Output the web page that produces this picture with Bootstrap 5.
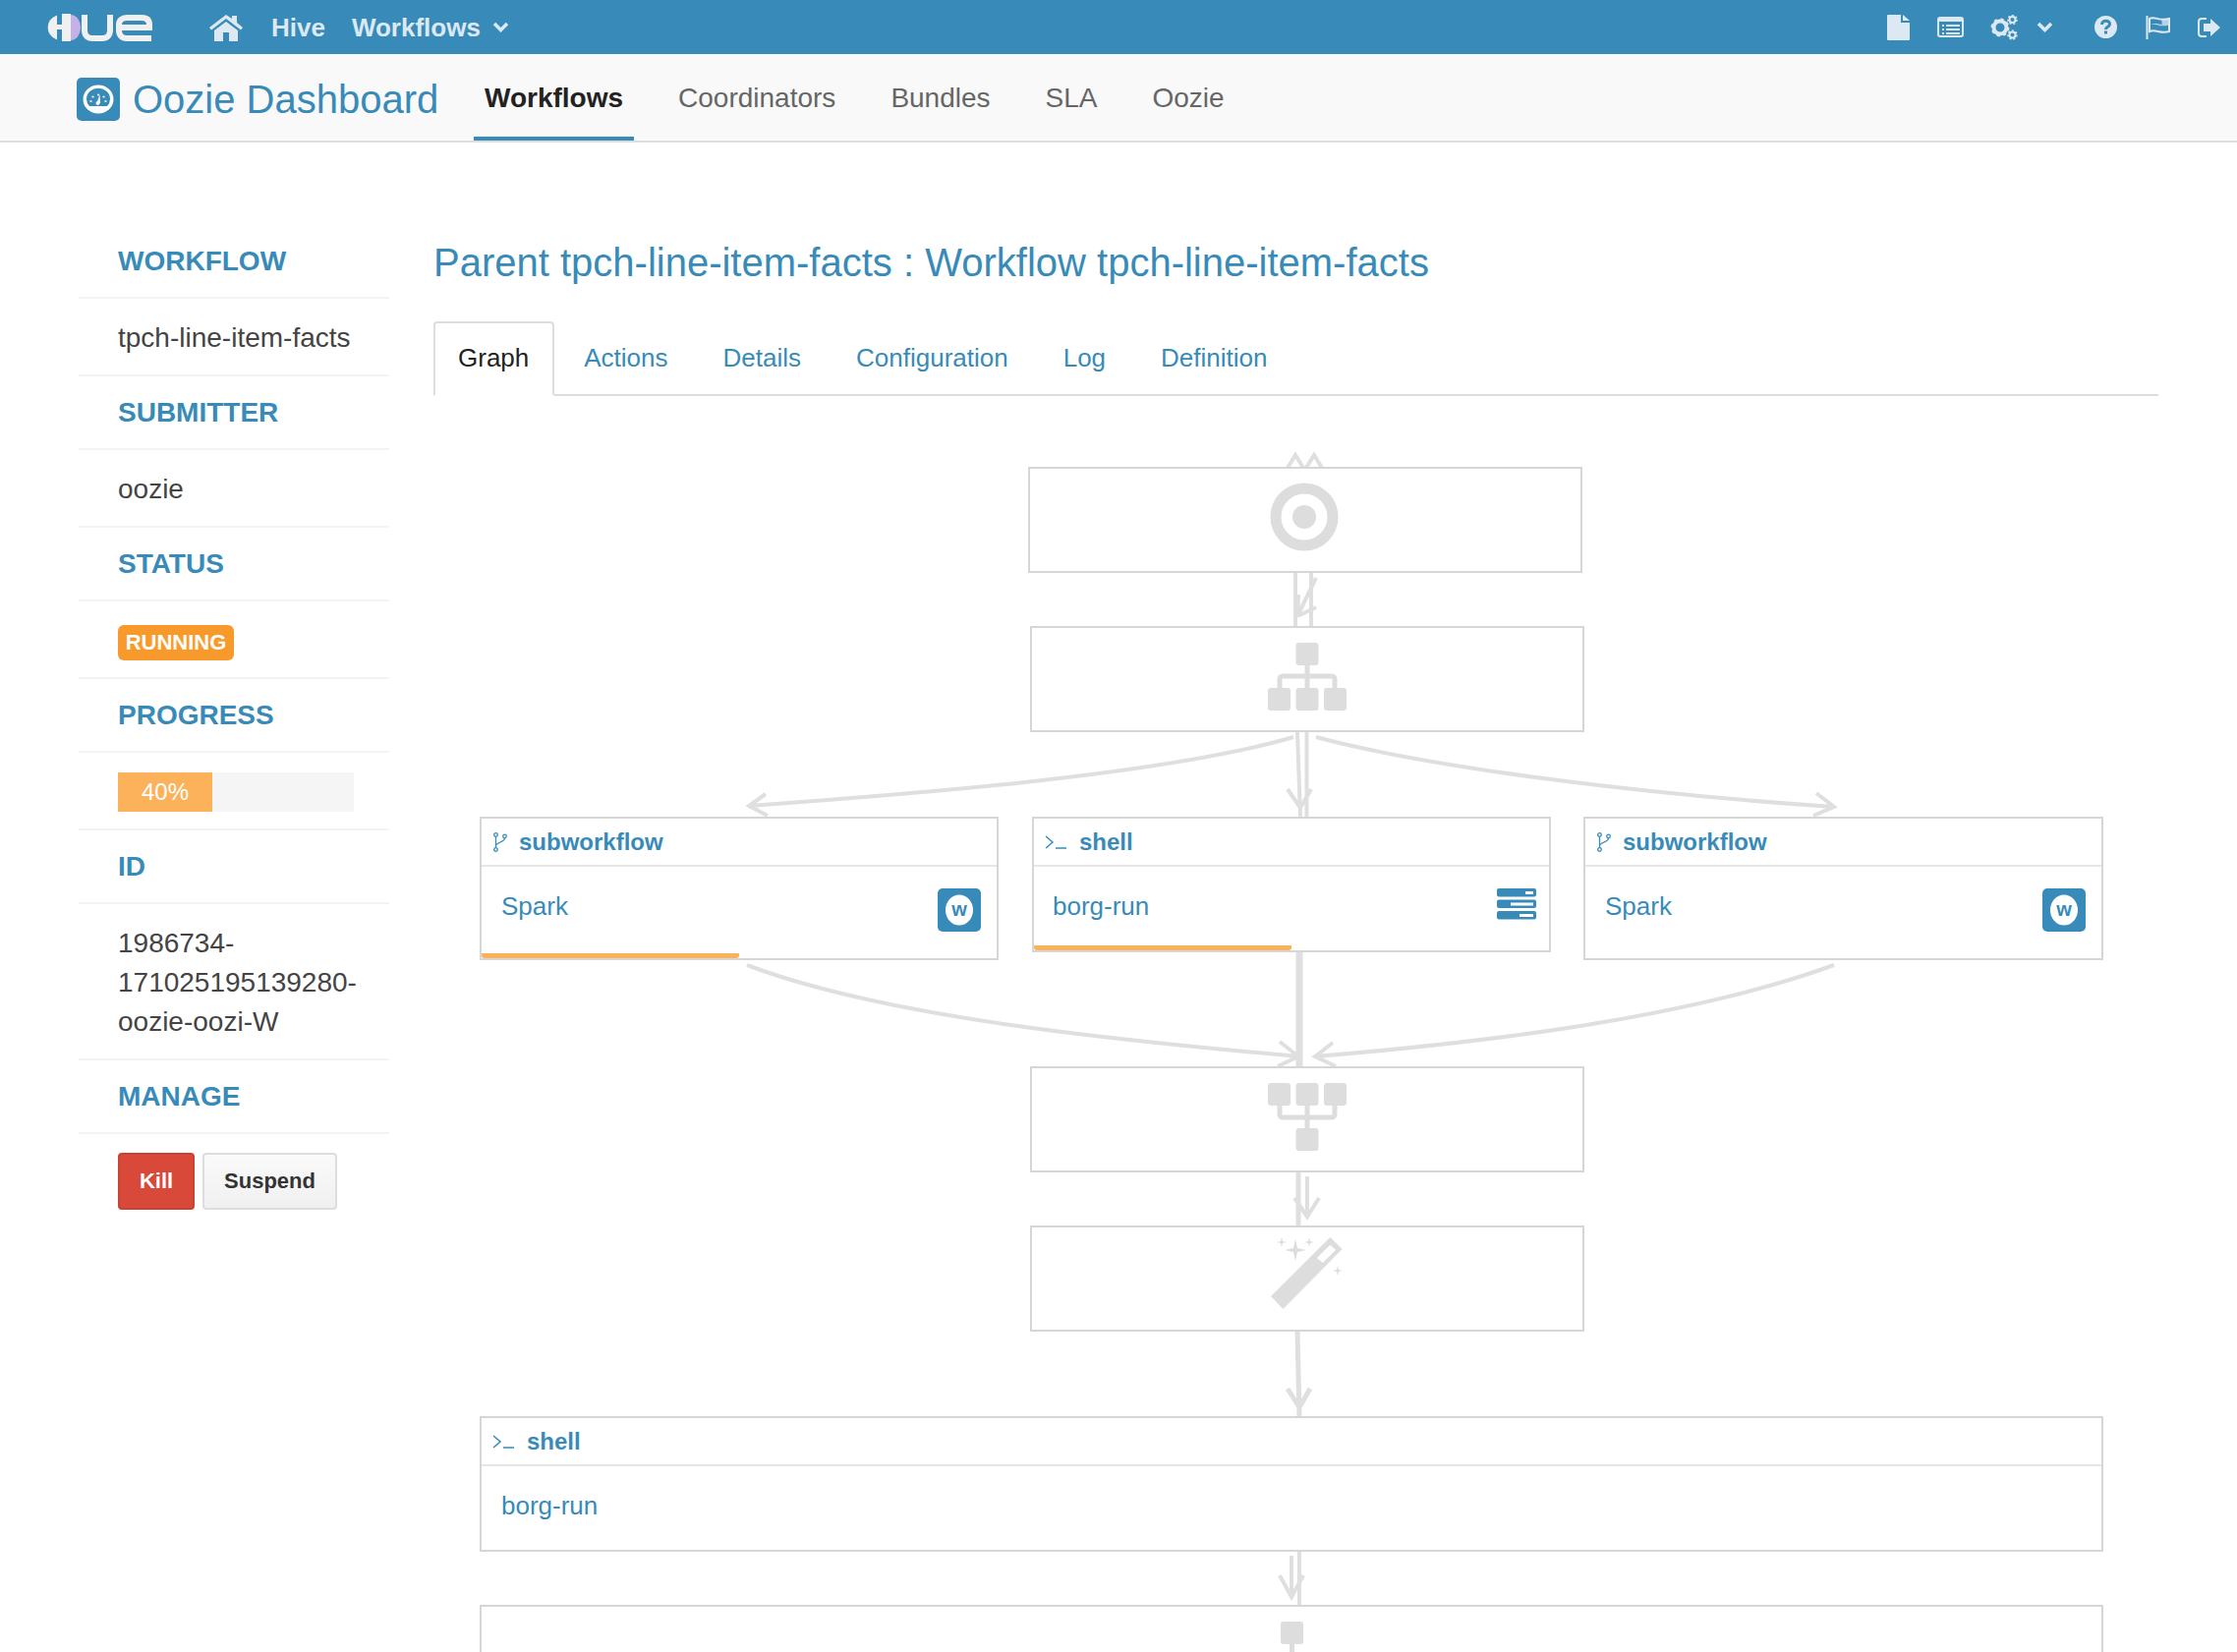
<!DOCTYPE html>
<html lang="en">
<head>
    <meta charset="UTF-8">
    <title>Oozie Dashboard</title>
    <link href="https://cdn.jsdelivr.net/npm/bootstrap@5.3.0/dist/css/bootstrap.min.css" rel="stylesheet">
    <style>
        html, body { height: 1681px; overflow: hidden; }
        body { font-family: "Liberation Sans", Arial, sans-serif; font-size: 28px; line-height: 40px; color: #444; background: #fff; }
        /* top bar */
        .hue-top { height: 55px; background: #388bb8; padding-left: 46px; padding-right: 17px; color: #dce9f3; }
        .hue-top svg { display: block; }
        .hue-logo { margin-right: 56px; }
        .top-link { font-size: 26px; font-weight: 700; color: #dce9f3; text-decoration: none; }
        .top-home { margin-right: 28px; }
        .top-wf { margin-left: 27px; margin-right: 12px; }
        .top-right { margin-left: auto; }
        .top-list { margin-left: 28px; }
        .top-gears { margin-left: 27px; }
        .top-caret { margin-left: 19px; }
        .top-help { margin-left: 42px; }
        .top-flag { margin-left: 29px; }
        .top-out { margin-left: 27px; }
        /* sub navbar */
        .oozie-bar { height: 90px; background: #f9f9f9; border-bottom: 2px solid #ddd; padding-left: 78px; }
        .oozie-logo { width: 44px; height: 44px; background: #388bb8; border-radius: 5px; margin-right: 13px; }
        .oozie-name { font-size: 40px; color: #388bb8; text-decoration: none; line-height: 44px; width: 347px; }
        .oozie-nav .nav-link { font-size: 28px; line-height: 40px; color: #666; padding: 25px 11px 20px; margin-right: 34px; border-bottom: 4px solid transparent; height: 88px; }
        .oozie-nav .nav-link.active { color: #222; font-weight: 700; border-bottom-color: #388bb8; }
        /* sidebar */
        .side-col { width: 316px; margin-left: 80px; margin-top: 84px; flex: none; }
        .side-head, .side-val { border-bottom: 2px solid #f3f3f3; padding-left: 40px; }
        .side-head { color: #388bb8; font-weight: 700; padding-top: 17px; padding-bottom: 16px; }
        .side-val { padding-top: 20px; padding-bottom: 17px; padding-right: 12px; overflow-wrap: anywhere; }
        .run-label { display: block; width: 118px; height: 36px; margin-top: 4px; background: #f89a2b; color: #fff; font-weight: 700; font-size: 22px; line-height: 36px; text-align: center; border-radius: 6px; }
        .side-progress { width: 240px; height: 40px; background: #f5f5f5; }
        .side-progress .progress-bar { background: #fbb25a; color: #fff; font-size: 24px; width: 96px; overflow: visible; }
        .side-btns { border: 0; padding-top: 19px; }
        .btn-kill, .btn-suspend { font-size: 22px; font-weight: 700; height: 58px; line-height: 24px; border-radius: 4px; padding: 0; }
        .btn-kill { width: 78px; background: #d8493a; border: 2px solid #c94234; color: #fff; margin-right: 8px; }
        .btn-suspend { width: 137px; background: linear-gradient(#fafafa, #f0f0f0); border: 2px solid #ddd; color: #333; }
        /* main */
        .main-col { margin-left: 45px; width: 1755px; flex: none; }
        .wf-title { font-size: 40px; line-height: 44px; font-weight: 400; color: #388bb8; margin: 100px 0 38px; }
        .wf-tabs { border-bottom: 2px solid #ddd; height: 76px; --bs-nav-tabs-border-width: 2px; }
        .wf-tabs .nav-link { font-size: 26px; line-height: 36px; color: #388bb8; padding: 17px 26px 21px; border: 2px solid transparent; border-radius: 0; background: none; height: 76px; }
        .wf-tabs .nav-link.active { color: #222; background: #fff; border: 2px solid #ddd; border-bottom-color: #fff; border-radius: 4px 4px 0 0; padding: 17px 24px 21px 23px; margin-right: 2px; }
        /* graph */
        .graph-wrap { position: relative; display: flow-root; }
        .graph-lines { position: absolute; left: 0; top: 0; }
        .graph-rows { position: relative; display: flow-root; }
        .gnode { background: #fff; border: 2px solid #d6d6d6; position: relative; }
        .gnode-plain { width: 564px; height: 108px; }
        .gnode svg { display: block; }
        .gr-1 { margin-top: 72px; margin-left: 605px; }
        .gr-2 { margin-top: 54px; margin-left: 607px; }
        .gr-3 { margin-top: 86px; margin-left: 47px; gap: 34px; }
        .gr-4 { margin-top: 108px; margin-left: 607px; }
        .gr-5 { margin-top: 54px; margin-left: 607px; }
        .gr-6 { margin-top: 86px; margin-left: 47px; }
        .gr-7 { margin-top: 54px; margin-left: 47px; }
        .ico-target { margin-left: 244px; margin-top: 14px; }
        .ico-tree { margin-left: 240px; margin-top: 15px; }
        .ico-wand { margin-left: 243px; margin-top: 10px; }
        .gact-sub { width: 528px; height: 146px; }
        .gact-sub2 { width: 529px; height: 146px; }
        .gact-shell { width: 528px; height: 138px; margin-right: -1px; }
        .gact-long { width: 1652px; height: 138px; }
        .gact-last { width: 1652px; height: 120px; }
        .gact-head { height: 49px; border-bottom: 2px solid #e6e6e6; padding-left: 11px; color: #388bb8; font-size: 24px; font-weight: 700; line-height: 47px; }
        .gact-head svg { margin-right: 11px; }
        .gact-head .ico-prompt { margin-right: 13px; }
        .gact-body { padding: 22px 16px 0 20px; color: #388bb8; font-size: 26px; line-height: 36px; }
        .gact-shell .gact-body { padding-left: 19px; padding-right: 13px; }
        .gact-link { color: #388bb8; }
        .gact-w { width: 44px; height: 44px; background: #388bb8; border-radius: 5px; }
        .gact-bar { position: absolute; left: 0; bottom: 0; height: 5px; background: #fbb25a; border-radius: 0 0 3px 3px; }
        .gact-sub .gact-bar { width: 262px; }
        .gact-shell .gact-bar { width: 262px; }
        .last-ico { margin: 15px auto 0; }
    </style>
</head>
<body>
    <nav class="hue-top d-flex align-items-center">
        <svg class="hue-logo" width="110" height="28" viewBox="0 0 110 28">
            <path d="M12 1.500A17 14 0 0 0 12 26.500V16H17V28H26V0H17V11H12Z" fill="#f0f0f0"/>
            <path d="M26 1A10 13 0 0 1 26 27Z" fill="#c4b2e6"/>
            <path d="M40 1V17C40 22 43 25 48 25H58C63 25 66 22 66 17V1" fill="none" stroke="#f0f0f0" stroke-width="6"/>
            <path d="M75 14H106V11C106 6 103 4 98 4H83C78 4 75 7 75 11V17C75 22 78 25 83 25H108" fill="none" stroke="#f0f0f0" stroke-width="6"/>
        </svg>
        <a class="top-link top-home" href="#"><svg width="36" height="28" viewBox="0 0 36 28"><path d="M18 1L1 14l2 2.500L18 5l15 11.500 2-2.500-6-5V2h-5v3ZM6 17v11h9v-9h6v9h9V17L18 8Z" fill="#dce9f3"/></svg></a>
        <a class="top-link" href="#">Hive</a>
        <a class="top-link top-wf" href="#">Workflows</a>
        <svg width="17" height="11" viewBox="0 0 17 11"><path d="M2 2l6.500 6.500L15 2" fill="none" stroke="#dce9f3" stroke-width="3.500"/></svg>
        <div class="top-right d-flex align-items-center">
            <svg width="23" height="26" viewBox="0 0 23 26"><path d="M1 0h13v8h9v17a1 1 0 0 1-1 1H1a1 1 0 0 1-1-1V1a1 1 0 0 1 1-1ZM16 0l7 6h-7Z" fill="#dce9f3"/></svg>
            <svg class="top-list" width="27" height="21" viewBox="0 0 27 21"><rect x="1" y="1" width="25" height="19" rx="2" fill="none" stroke="#dce9f3" stroke-width="2"/><rect x="1" y="1" width="25" height="4" rx="2" fill="#dce9f3"/><path d="M5 8h2v2H5zM9 8h14v2H9zM5 12h2v2H5zM9 12h14v2H9zM5 16h2v2H5zM9 16h14v2H9z" fill="#dce9f3"/></svg>
            <svg class="top-gears" width="28" height="26" viewBox="0 0 28 26">
                <circle cx="10" cy="13" r="6.500" fill="none" stroke="#dce9f3" stroke-width="4"/>
                <circle cx="10" cy="13" r="8" fill="none" stroke="#dce9f3" stroke-width="3" stroke-dasharray="3 3.300"/>
                <circle cx="22.500" cy="5" r="3" fill="none" stroke="#dce9f3" stroke-width="2"/>
                <circle cx="22.500" cy="5" r="4.500" fill="none" stroke="#dce9f3" stroke-width="1.500" stroke-dasharray="2 2"/>
                <circle cx="22.500" cy="20.500" r="3" fill="none" stroke="#dce9f3" stroke-width="2"/>
                <circle cx="22.500" cy="20.500" r="4.500" fill="none" stroke="#dce9f3" stroke-width="1.500" stroke-dasharray="2 2"/>
            </svg>
            <svg class="top-caret" width="17" height="11" viewBox="0 0 17 11"><path d="M2 2l6.500 6.500L15 2" fill="none" stroke="#dce9f3" stroke-width="3.500"/></svg>
            <svg class="top-help" width="23" height="23" viewBox="0 0 23 23"><circle cx="11.500" cy="11.500" r="11.500" fill="#dce9f3"/><path d="M7.500 9c0-5 8-5 8-.500 0 3-4 2.500-4 5.500" fill="none" stroke="#388bb8" stroke-width="3"/><rect x="10" y="15.500" width="3" height="3" fill="#388bb8"/></svg>
            <svg class="top-flag" width="26" height="24" viewBox="0 0 26 24"><path d="M1.500 0v24" stroke="#dce9f3" stroke-width="2"/><path d="M4 3c6-3 9 3 20 0v13c-9 3-14-3-20 0Z" fill="none" stroke="#dce9f3" stroke-width="2"/><path d="M4 9.500c6-3 9 3 20 0V3c-3 .8-5.500.8-7.500.300V9.200c-4-1-7-2.500-12.500.3Z" fill="#dce9f3" opacity=".75"/></svg>
            <svg class="top-out" width="23" height="20" viewBox="0 0 23 20"><path d="M9 1H4a3 3 0 0 0-3 3v12a3 3 0 0 0 3 3h5" fill="none" stroke="#dce9f3" stroke-width="2"/><path d="M13 1l10 9-10 9v-5H6V6h7Z" fill="#dce9f3"/></svg>
        </div>
    </nav>

    <div class="oozie-bar d-flex align-items-start">
        <div class="oozie-logo d-flex align-items-center justify-content-center mt-4 flex-none">
            <svg width="32" height="30" viewBox="0 0 32 30"><ellipse cx="16" cy="15" rx="15.500" ry="14.500" fill="#fff"/><path d="M7 22a12 11 0 1 1 18 0Z" fill="#388bb8"/><circle cx="15.500" cy="19" r="2" fill="#fff"/><path d="M14.500 19l3-9 .5 9Z" fill="#fff"/><g fill="#fff"><circle cx="8.500" cy="17" r="1.100"/><circle cx="10.500" cy="12.500" r="1.100"/><circle cx="16" cy="10.500" r="1.100"/><circle cx="21.500" cy="12.500" r="1.100"/><circle cx="23.500" cy="17" r="1.100"/></g></svg>
        </div>
        <a class="oozie-name mt-4" href="#">Oozie Dashboard</a>
        <ul class="nav oozie-nav">
            <li class="nav-item"><a class="nav-link active" href="#">Workflows</a></li>
            <li class="nav-item"><a class="nav-link" href="#">Coordinators</a></li>
            <li class="nav-item"><a class="nav-link" href="#">Bundles</a></li>
            <li class="nav-item"><a class="nav-link" href="#">SLA</a></li>
            <li class="nav-item"><a class="nav-link" href="#">Oozie</a></li>
        </ul>
    </div>

    <div class="d-flex">
        <aside class="side-col">
            <div class="side-head">WORKFLOW</div>
            <div class="side-val">tpch-line-item-facts</div>
            <div class="side-head">SUBMITTER</div>
            <div class="side-val">oozie</div>
            <div class="side-head">STATUS</div>
            <div class="side-val"><span class="run-label">RUNNING</span></div>
            <div class="side-head">PROGRESS</div>
            <div class="side-val">
                <div class="progress side-progress rounded-0"><div class="progress-bar">40%</div></div>
            </div>
            <div class="side-head">ID</div>
            <div class="side-val">1986734-171025195139280-oozie-oozi-W</div>
            <div class="side-head">MANAGE</div>
            <div class="side-val side-btns">
                <button class="btn btn-kill" type="button">Kill</button><button class="btn btn-suspend" type="button">Suspend</button>
            </div>
        </aside>

        <main class="main-col">
            <h3 class="wf-title">Parent tpch-line-item-facts : Workflow tpch-line-item-facts</h3>
            <ul class="nav nav-tabs wf-tabs">
                <li class="nav-item"><a class="nav-link active" href="#">Graph</a></li>
                <li class="nav-item"><a class="nav-link" href="#">Actions</a></li>
                <li class="nav-item"><a class="nav-link" href="#">Details</a></li>
                <li class="nav-item"><a class="nav-link" href="#">Configuration</a></li>
                <li class="nav-item"><a class="nav-link" href="#">Log</a></li>
                <li class="nav-item"><a class="nav-link" href="#">Definition</a></li>
            </ul>

            <div class="graph-wrap">
                <!-- arrows are in page coordinates, hence the viewBox offset -->
                <svg class="graph-lines" width="1835" height="1278" viewBox="441 403 1835 1278" fill="none" stroke="#dfdfdf" stroke-width="4">
                    <path d="M1310 476l8-13 8 13M1329 476l8-13 8 13"/>
                    <path d="M1318 583v54M1334 583v54M1339 588l-19 39M1339 618l-19 9M1321 605l-1 22"/>
                    <path d="M1316 750C1180 790 900 810 762 820M779 808l-17 12 19 10"/>
                    <path d="M1339 750C1470 785 1700 810 1866 821M1848 807l18 14-21 9"/>
                    <path d="M1320 745l3 86M1329.500 745v86M1310 803l13 19 11-19" />
                    <path d="M760 982C900 1035 1130 1058 1321 1075M1302 1060l19 15-21 10"/>
                    <path d="M1866 982C1720 1035 1520 1060 1338 1075M1356 1061l-18 14 21 10"/>
                    <path d="M1322 968v117" stroke-width="7"/>
                    <path d="M1321 1193v54" stroke-width="5"/>
                    <path d="M1330 1197v41M1317 1219l13 19 12-19"/>
                    <path d="M1320 1355l2 86M1310 1413l12 19 11-19" stroke-width="5"/>
                    <path d="M1322 1578v55"/>
                    <path d="M1314 1583v42M1302 1603l12 22 12-22"/>
                </svg>
                <div class="graph-rows">
                    <div class="gr-1"><div class="gnode gnode-plain">
                        <svg class="ico-target" width="70" height="70" viewBox="0 0 70 70"><circle cx="35" cy="35" r="29" fill="none" stroke="#ddd" stroke-width="11"/><circle cx="35" cy="35" r="12" fill="#ddd"/></svg>
                    </div></div>
                    <div class="gr-2"><div class="gnode gnode-plain">
                        <svg class="ico-tree" width="80" height="69" viewBox="0 0 80 69"><g fill="#ddd"><rect x="28.500" width="23" height="23" rx="3"/><rect y="46" width="23" height="23" rx="3"/><rect x="28.500" y="46" width="23" height="23" rx="3"/><rect x="57" y="46" width="23" height="23" rx="3"/></g><path d="M40 23v23M12 46V37a3 3 0 0 1 3-3h50a3 3 0 0 1 3 3v9" fill="none" stroke="#ddd" stroke-width="5"/></svg>
                    </div></div>
                    <div class="gr-3 d-flex align-items-start">
                        <div class="gnode gact-sub">
                            <div class="gact-head d-flex align-items-center"><svg width="16" height="20" viewBox="0 0 16 20" fill="none" stroke="#388bb8" stroke-width="1.300"><circle cx="3.500" cy="2.500" r="1.800"/><circle cx="3.500" cy="17.500" r="1.800"/><circle cx="12.500" cy="4" r="1.800"/><path d="M3.500 4.500v11M12.500 6c0 4-9 4-9 8"/></svg>subworkflow</div>
                            <div class="gact-body d-flex justify-content-between align-items-start">
                                <a class="text-decoration-none gact-link" href="#">Spark</a>
                                <div class="gact-w d-flex align-items-center justify-content-center"><svg width="28" height="32" viewBox="0 0 28 32"><ellipse cx="14" cy="16" rx="14" ry="15.500" fill="#fff"/><text x="14" y="22" font-family="Liberation Sans" font-size="20" font-weight="700" text-anchor="middle" fill="#388bb8">w</text></svg></div>
                            </div>
                            <div class="gact-bar"></div>
                        </div>
                        <div class="gnode gact-shell">
                            <div class="gact-head d-flex align-items-center"><svg class="ico-prompt" width="22" height="14" viewBox="0 0 22 14" fill="none" stroke="#388bb8" stroke-width="1.500"><path d="M1 1l7 6-7 6M11 13h11"/></svg>shell</div>
                            <div class="gact-body d-flex justify-content-between align-items-start">
                                <a class="text-decoration-none gact-link" href="#">borg-run</a>
                                <svg width="40" height="32" viewBox="0 0 40 32" fill="#388bb8"><rect width="40" height="8.500" rx="2"/><rect y="11.500" width="40" height="8.500" rx="2"/><rect y="23" width="40" height="8.500" rx="2"/><path d="M29 3h8v3h-8zM14 14.500h23v3H14zM23 26h14v3H23z" fill="#fff"/></svg>
                            </div>
                            <div class="gact-bar"></div>
                        </div>
                        <div class="gnode gact-sub2">
                            <div class="gact-head d-flex align-items-center"><svg width="16" height="20" viewBox="0 0 16 20" fill="none" stroke="#388bb8" stroke-width="1.300"><circle cx="3.500" cy="2.500" r="1.800"/><circle cx="3.500" cy="17.500" r="1.800"/><circle cx="12.500" cy="4" r="1.800"/><path d="M3.500 4.500v11M12.500 6c0 4-9 4-9 8"/></svg>subworkflow</div>
                            <div class="gact-body d-flex justify-content-between align-items-start">
                                <a class="text-decoration-none gact-link" href="#">Spark</a>
                                <div class="gact-w d-flex align-items-center justify-content-center"><svg width="28" height="32" viewBox="0 0 28 32"><ellipse cx="14" cy="16" rx="14" ry="15.500" fill="#fff"/><text x="14" y="22" font-family="Liberation Sans" font-size="20" font-weight="700" text-anchor="middle" fill="#388bb8">w</text></svg></div>
                            </div>
                        </div>
                    </div>
                    <div class="gr-4"><div class="gnode gnode-plain">
                        <svg class="ico-tree" width="80" height="69" viewBox="0 0 80 69"><g fill="#ddd"><rect x="28.500" y="46" width="23" height="23" rx="3"/><rect width="23" height="23" rx="3"/><rect x="28.500" width="23" height="23" rx="3"/><rect x="57" width="23" height="23" rx="3"/></g><path d="M40 23v23M12 23v9a3 3 0 0 0 3 3h50a3 3 0 0 0 3-3v-9" fill="none" stroke="#ddd" stroke-width="5"/></svg>
                    </div></div>
                    <div class="gr-5"><div class="gnode gnode-plain">
                        <svg class="ico-wand" width="74" height="74" viewBox="1293 1259 74 74" fill="#ddd"><path d="M1293 1319l60.400-60 12.200 12-60.100 61Z"/><path d="M1340 1280l13.400-13.300 5.600 5-13.300 13.300Z" fill="#fff"/><path d="M1318 1261l2 9 9 2-9 2-2 9-2-9-9-2 9-2Z"/><path d="M1304 1259l1 4 4 1-4 1-1 4-1-4-4-1 4-1ZM1332 1259l1 4 4 1-4 1-1 4-1-4-4-1 4-1ZM1361 1288l1 4 4 1-4 1-1 4-1-4-4-1 4-1Z"/></svg>
                    </div></div>
                    <div class="gr-6"><div class="gnode gact-long">
                        <div class="gact-head d-flex align-items-center"><svg class="ico-prompt" width="22" height="14" viewBox="0 0 22 14" fill="none" stroke="#388bb8" stroke-width="1.500"><path d="M1 1l7 6-7 6M11 13h11"/></svg>shell</div>
                        <div class="gact-body"><a class="text-decoration-none gact-link" href="#">borg-run</a></div>
                    </div></div>
                    <div class="gr-7"><div class="gnode gact-last">
                        <svg class="last-ico" width="23" height="40" viewBox="0 0 23 40"><rect width="23" height="23" rx="3" fill="#ddd"/><path d="M11.500 23v17" stroke="#ddd" stroke-width="5"/></svg>
                    </div></div>
                </div>
            </div>
        </main>
    </div>
</body>
</html>
